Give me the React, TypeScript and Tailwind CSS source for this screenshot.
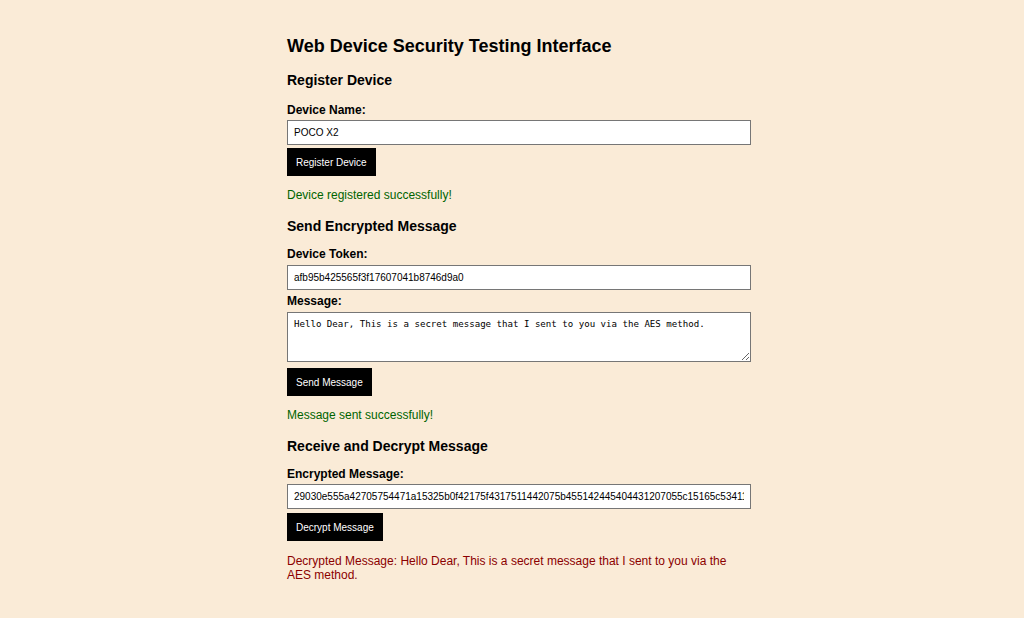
import React from 'react';

export default function App() {
    const token = 'afb95b425565f3f17607041b8746d9a0';
    const encrypted = '29030e555a42705754471a15325b0f42175f4317511442075b455142445404431207055c15165c53411e4c0b5a1d';

    return (
        <div className="min-h-[618px] bg-[#faebd7] font-['Liberation_Sans',Arial,sans-serif] text-black">
            <div className="ml-[287px] w-[464px] pt-[35px]">
                <h1 className="text-[18px] font-bold leading-[22px]">Web Device Security Testing Interface</h1>

                <h2 className="mt-[14px] text-[14px] font-bold leading-[18px]">Register Device</h2>
                <label className="mt-[13px] block text-[12px] font-bold leading-[16px]">Device Name:</label>
                <input
                    type="text"
                    defaultValue="POCO X2"
                    className="mt-[2px] block h-[25px] w-full border border-[#767676] bg-white px-[6px] text-[10px]"
                />
                <button className="mt-[3px] block h-[28px] bg-black px-[9px] text-[10px] text-white">Register Device</button>
                <p className="mt-[11px] text-[12px] leading-[16px] text-[#006400]">Device registered successfully!</p>

                <h2 className="mt-[14px] text-[14px] font-bold leading-[18px]">Send Encrypted Message</h2>
                <label className="mt-[11px] block text-[12px] font-bold leading-[16px]">Device Token:</label>
                <input
                    type="text"
                    defaultValue={token}
                    className="mt-[3px] block h-[25px] w-full border border-[#767676] bg-white px-[6px] text-[10px]"
                />
                <label className="mt-[3px] block text-[12px] font-bold leading-[16px]">Message:</label>
                <textarea
                    defaultValue="Hello Dear, This is a secret message that I sent to you via the AES method."
                    className="mt-[3px] block h-[50px] w-full border border-[#767676] bg-white px-[6px] py-[5px] font-['DejaVu_Sans_Mono',monospace] text-[9.1px] leading-[12px]"
                />
                <button className="mt-[6px] block h-[28px] bg-black px-[9px] text-[10px] text-white">Send Message</button>
                <p className="mt-[11px] text-[12px] leading-[16px] text-[#006400]">Message sent successfully!</p>

                <h2 className="mt-[14px] text-[14px] font-bold leading-[18px]">Receive and Decrypt Message</h2>
                <label className="mt-[11px] block text-[12px] font-bold leading-[16px]">Encrypted Message:</label>
                <input
                    type="text"
                    defaultValue={encrypted}
                    className="mt-[2px] block h-[25px] w-full border border-[#767676] bg-white px-[6px] text-[10px]"
                />
                <button className="mt-[4px] block h-[28px] bg-black px-[9px] text-[10px] text-white">Decrypt Message</button>
                <p className="mt-[13px] text-[12px] leading-[14px] text-[#8b0000]">
                    Decrypted Message: Hello Dear, This is a secret message that I sent to you via the AES method.
                </p>
            </div>
        </div>
    );
}
